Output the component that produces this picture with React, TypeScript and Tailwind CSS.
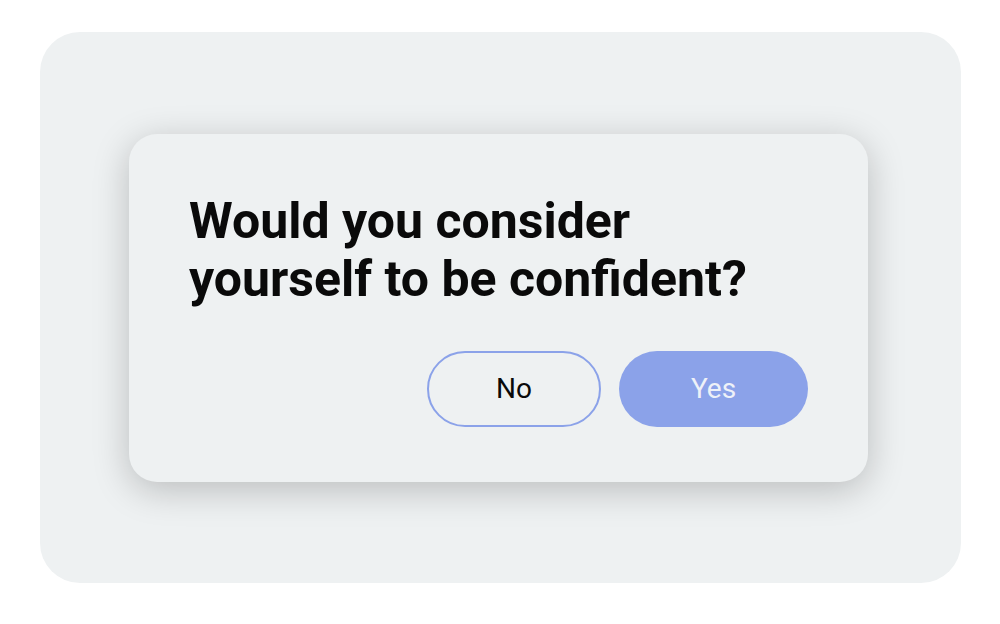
export default function App() {
  return (
    <div className="flex h-[624px] w-[1000px] items-start justify-center bg-white pt-[32px] font-['Roboto',sans-serif]">
      <div className="flex h-[551px] w-[921px] items-center justify-center rounded-[40px] bg-[#eef1f2]">
        <div className="ml-[-3px] flex h-[348px] w-[739px] flex-col rounded-[28px] bg-[#eef1f2] px-[60px] pt-[58px] shadow-[0_8px_36px_rgba(0,0,0,0.22)]">
          <h1 className="text-[50px] font-bold leading-[58px] text-[#0a0a0a]">
            Would you consider
            <br />
            yourself to be confident?
          </h1>
          <div className="mt-[43px] flex justify-end gap-[18px]">
            <button
              type="button"
              className="h-[76px] w-[174px] rounded-full border-2 border-[#8ba2e9] text-[28px] text-[#0a0a0a]"
            >
              No
            </button>
            <button
              type="button"
              className="h-[76px] w-[189px] rounded-full bg-[#8ba2e9] text-[28px] text-[#eef1f8]"
            >
              Yes
            </button>
          </div>
        </div>
      </div>
    </div>
  );
}
